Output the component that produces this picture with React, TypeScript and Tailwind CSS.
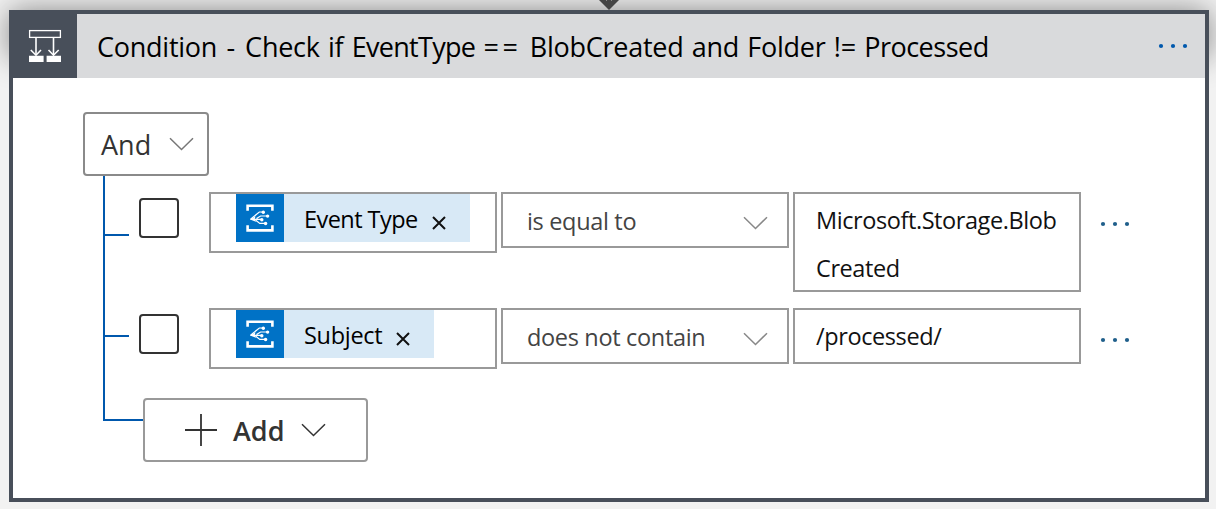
import React from "react";

function Chevron({ className }: { className: string }) {
  return (
    <svg className={className} width="26" height="14" viewBox="0 0 26 14" fill="none" stroke="currentColor" strokeWidth="1.5">
      <path d="M2 1.2 L13.5 12.5 L25 1.2" />
    </svg>
  );
}

function Dots({ className }: { className: string }) {
  return (
    <svg className={className} width="30" height="6" viewBox="0 0 30 6" fill="currentColor">
      <circle cx="3" cy="3" r="2.1" />
      <circle cx="15" cy="3" r="2.1" />
      <circle cx="27" cy="3" r="2.1" />
    </svg>
  );
}

function ConditionIcon() {
  return (
    <svg width="64" height="64" viewBox="0 0 64 64" fill="none" stroke="#fff">
      <rect x="16.6" y="16.6" width="30.8" height="6.8" strokeWidth="1.3" />
      <path d="M23 23.5V41M40.5 23.5V41" strokeWidth="1.6" />
      <path d="M17.8 36L23 41.2L28 36M35.5 36L40.5 41.2L45.7 36" strokeWidth="1.6" />
      <path d="M16 41.8H30.6V48H16ZM33.6 41.8H48V48H33.6Z" fill="#fff" stroke="none" />
    </svg>
  );
}

function EventGridIcon() {
  return (
    <svg className="shrink-0 bg-[#0072c6]" width="48" height="48" viewBox="0 0 48 48" fill="none" stroke="#fff">
      <path d="M11.6 16.7V11.7H36.4V16.7M11.6 31.3V36.4H36.4V31.3" strokeWidth="2.6" />
      <path d="M14.5 25.3L23.3 18H27.3M14.5 25.3H25.7M19.5 26L23.8 29.4H29.5M20.5 24.6L24.6 22H31.5" strokeWidth="1.2" />
      <path d="M14 25.5L19.5 22.2L18.6 25.5L20.5 28Z" fill="#fff" stroke="none" />
      <g fill="#fff" stroke="none">
        <circle cx="27.3" cy="18.2" r="1.7" />
        <circle cx="31.6" cy="22.1" r="1.7" />
        <circle cx="25.8" cy="25.7" r="1.7" />
        <circle cx="29.6" cy="29.5" r="1.7" />
      </g>
    </svg>
  );
}

function Token({ children, text }: { children: string; text: string }) {
  return (
    <div className="ml-[25px] flex h-12 w-fit bg-[#d8e9f6] pr-6">
      <EventGridIcon />
      <span className={`ml-5 whitespace-nowrap text-[23.5px] leading-[50px] text-black ${text}`}>{children}</span>
      <svg className="ml-[14px] mt-[22px]" width="14" height="14" viewBox="0 0 14 14" stroke="#111" strokeWidth="2">
        <path d="M1 1L13 13M13 1L1 13" />
      </svg>
    </div>
  );
}

interface RowProps {
  token: string;
  tokenText: string;
  operator: string;
  operatorText: string;
  value: string[];
  valueText: string;
}

function ConditionRow({ token, tokenText, operator, operatorText, value, valueText }: RowProps) {
  return (
    <div className="flex items-start">
      <div className="ml-2.5 mr-[30px] mt-1.5 size-10 shrink-0 rounded-[4px] border-2 border-[#333]" />
      <div className="mr-1 h-[61px] w-72 shrink-0 border-2 border-[#999]">
        <Token text={tokenText}>{token}</Token>
      </div>
      <div className="mr-1 flex h-14 w-72 shrink-0 items-center justify-between border-2 border-[#999] pl-6 pr-[19px]">
        <span className={`whitespace-nowrap pt-px text-[23.5px] leading-8 text-[#444] ${operatorText}`}>{operator}</span>
        <Chevron className="mt-1.5 text-[#888]" />
      </div>
      <div className="w-72 shrink-0 border-2 border-[#999] pl-[21px]">
        {value.map((line) => (
          <div key={line} className="flex h-12 items-start pt-[10px] only:h-[52px]">
            <span className={`whitespace-nowrap text-[23.5px] leading-8 text-[#111] ${valueText}`}>{line}</span>
          </div>
        ))}
      </div>
      <Dots className="ml-[19px] mt-[29px] text-[#1f5f8b]" />
    </div>
  );
}

export default function App() {
  return (
    <div className="relative h-[509px] w-[1216px] overflow-hidden bg-[#f2f2f2] px-[9px] pt-2.5 font-['Open_Sans',sans-serif]">
      <div className="absolute left-[9px] top-2.5 h-12 w-[1200px] shadow-[0_0_30px_rgba(0,0,0,0.45)]" />
      <svg className="absolute left-[598px] top-0" width="22" height="10" viewBox="0 0 22 10">
        <path d="M1 0H21L11 10Z" fill="#444" />
        <path d="M8 0H9M13 0H14" stroke="#ccc" />
      </svg>
      <div className="relative h-[492px] w-[1200px] border-4 border-[#484f5a] bg-white">
        <header className="flex h-16 items-center bg-[#d9dadc]">
          <div className="size-16 shrink-0 bg-[#484f5a]">
            <ConditionIcon />
          </div>
          <h1 className="ml-5 whitespace-nowrap pt-0.5 text-[27px] leading-9 tracking-[-0.25px] text-black [word-spacing:1.5px]">
            Condition <span className="mr-[2px] pl-px">-</span> Check if <span className="tracking-[-0.7px]">EventType</span>{" "}
            <span className="tracking-[3.5px]">==</span> BlobCreated and Folder !={" "}
            <span className="tracking-[-0.5px]">Processed</span>
          </h1>
          <Dots className="ml-auto mr-[17px] text-[#0058ad]" />
        </header>
        <main className="pl-[70px] pt-[34px]">
          <div className="flex h-16 w-[126px] items-center justify-between rounded-[4px] border-2 border-[#8a8a8a] pl-4 pr-[13px]">
            <span className="pt-0.5 text-[27px] leading-9 text-[#333]">And</span>
            <Chevron className="text-[#777]" />
          </div>
          <div className="ml-5 flex items-start">
            <div className="flex h-[245px] w-[26px] shrink-0 flex-col border-b-2 border-l-2 border-[#0058ad] pt-[58px]">
              <div className="h-0.5 bg-[#0058ad]" />
              <div className="mt-[99px] h-0.5 bg-[#0058ad]" />
            </div>
            <div className="flex flex-col pt-4">
              <ConditionRow
                token="Event Type"
                tokenText="tracking-[-0.55px]"
                operator="is equal to"
                operatorText="tracking-[-0.33px]"
                value={["Microsoft.Storage.Blob", "Created"]}
                valueText="tracking-[-0.42px]"
              />
              <div className="h-4" />
              <ConditionRow
                token="Subject"
                tokenText="tracking-[-0.3px]"
                operator="does not contain"
                operatorText="tracking-[-0.33px]"
                value={["/processed/"]}
                valueText="tracking-[-0.4px]"
              />
              <div className="mt-[29px] flex items-start">
                <div className="mt-[21px] h-0.5 w-3.5 bg-[#0058ad]" />
                <div className="flex h-16 w-[225px] items-center rounded-[4px] border-2 border-[#999] pl-10">
                  <svg width="32" height="32" viewBox="0 0 32 32" stroke="#333" strokeWidth="1.8">
                    <path d="M0 16H32M16 0V32" />
                  </svg>
                  <span className="ml-4 pt-0.5 text-[27px] font-semibold leading-9 text-[#333]">Add</span>
                  <Chevron className="ml-4 text-[#333]" />
                </div>
              </div>
            </div>
          </div>
        </main>
      </div>
    </div>
  );
}
